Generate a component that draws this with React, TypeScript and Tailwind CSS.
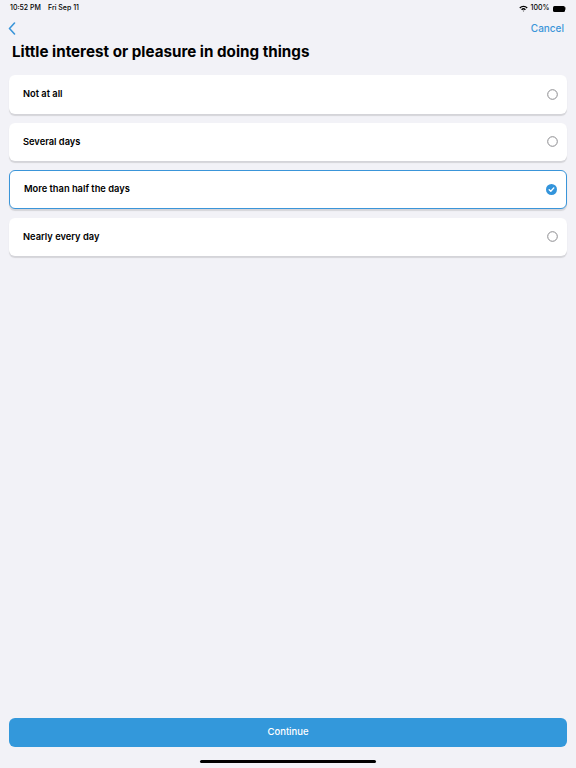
import React, { useState } from "react";

const options = ["Not at all", "Several days", "More than half the days", "Nearly every day"];

function Radio({ checked }: { checked: boolean }) {
  if (checked) {
    return (
      <svg width="11" height="11" viewBox="0 0 11 11">
        <circle cx="5.5" cy="5.5" r="5.5" fill="#3394db" />
        <path d="M3.2 5.7 L4.8 7.2 L7.8 3.9" fill="none" stroke="#fff" strokeWidth="1.4" strokeLinecap="round" strokeLinejoin="round" />
      </svg>
    );
  }
  return (
    <svg width="11" height="11" viewBox="0 0 11 11">
      <circle cx="5.5" cy="5.5" r="4.8" fill="none" stroke="#8a8a8e" strokeWidth="1" />
    </svg>
  );
}

export default function App() {
  const [selected, setSelected] = useState(2);

  return (
    <div
      className="flex h-[768px] w-[576px] flex-col bg-[#f2f2f7] text-black"
      style={{ fontFamily: "Inter, 'Liberation Sans', sans-serif" }}
    >
      {/* status bar */}
      <div className="flex h-[15px] items-center justify-between px-[10px] pt-[2px] text-[7px] font-medium">
        <div className="flex gap-[7px]">
          <span>10:52 PM</span>
          <span>Fri Sep 11</span>
        </div>
        <div className="flex items-center gap-[3px]">
          <svg width="9" height="7" viewBox="0 0 9 7">
            <path d="M0.3 2.4 A6 6 0 0 1 8.7 2.4 L7.7 3.4 A4.6 4.6 0 0 0 1.3 3.4 Z" fill="#000" />
            <path d="M2.1 4.2 A3.4 3.4 0 0 1 6.9 4.2 L5.9 5.2 A2 2 0 0 0 3.1 5.2 Z" fill="#000" />
            <path d="M3.8 5.9 L4.5 6.6 L5.2 5.9 A1 1 0 0 0 3.8 5.9 Z" fill="#000" />
          </svg>
          <span>100%</span>
          <div className="flex items-center">
            <div className="h-[6px] w-[12px] rounded-[1.5px] bg-black" />
            <div className="ml-[0.5px] h-[2.5px] w-[1px] rounded-r-sm bg-[#888]" />
          </div>
        </div>
      </div>

      {/* nav bar */}
      <div className="flex h-[27px] items-center justify-between pl-[8px] pr-[12px]">
        <svg width="8" height="13" viewBox="0 0 8 13">
          <path d="M6.5 1 L1.5 6.5 L6.5 12" fill="none" stroke="#3a95d9" strokeWidth="1.6" strokeLinecap="round" strokeLinejoin="round" />
        </svg>
        <span className="text-[10px] font-medium text-[#3a95d9]">Cancel</span>
      </div>

      <h1 className="px-[12px] pt-[1px] pb-[14px] text-[15.2px] leading-[18px] font-bold">
        Little interest or pleasure in doing things
      </h1>

      <div className="flex flex-col gap-[9px] px-[9px]">
        {options.map((o, i) => {
          const checked = selected === i;
          return (
            <button
              key={o}
              onClick={() => setSelected(i)}
              className={`flex h-[38.5px] items-center justify-between rounded-[6px] bg-white pl-[14px] pr-[9px] text-left shadow-[0_1.5px_1px_rgba(0,0,0,0.12)] ${
                checked ? "border border-[#3a95d9] pl-[13px] pr-[8px]" : ""
              }`}
            >
              <span className="text-[9.3px] font-semibold">{o}</span>
              <Radio checked={checked} />
            </button>
          );
        })}
      </div>

      <div className="flex-1" />

      <div className="px-[9px]">
        <button className="flex h-[29px] w-full items-center justify-center rounded-[6px] bg-[#3398db] text-[9.5px] font-medium text-white">
          Continue
        </button>
      </div>

      <div className="flex h-[21px] items-end justify-center pb-[5px]">
        <div className="h-[3px] w-[176px] rounded-full bg-black" />
      </div>
    </div>
  );
}
